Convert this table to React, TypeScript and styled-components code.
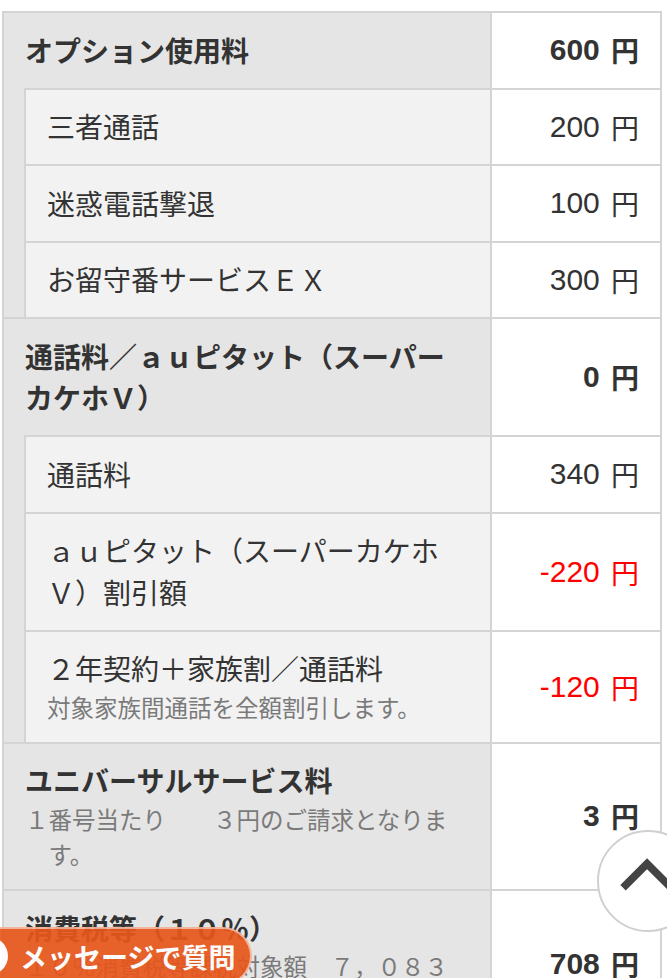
import React from "react";
import styled, { createGlobalStyle } from "styled-components";

const GlobalStyle = createGlobalStyle`
  html, body { margin: 0; padding: 0; background: #fff; }
  body {
    font-family: "Noto Sans CJK JP", "Noto Sans", sans-serif;
    color: #333;
  }
`;

const Page = styled.div`
  position: relative;
  height: 978px;
  overflow: hidden;
  padding-top: 11px;
  box-sizing: border-box;
`;

const Table = styled.div`
  margin: 0 5px 0 2px;
  border: 2px solid #d4d4d4;
  border-bottom: none;
  background: #e5e5e5;
`;

const Section = styled.div`
  & + & {
    border-top: 2px solid #d4d4d4;
  }
`;

const Row = styled.div`
  display: grid;
  grid-template-columns: 1fr 170px;
`;

const Label = styled.div<{ $sub?: boolean }>`
  padding: 16.5px 21px;
  font-size: 28px;
  line-height: 41.5px;
  font-weight: ${(p) => (p.$sub ? 400 : 700)};
  color: #333;
  ${(p) =>
    p.$sub
      ? `
    margin-left: 20px;
    border-left: 2px solid #d4d4d4;
    border-top: 2px solid #d4d4d4;
    background: #f2f2f2;
  `
      : ""}
`;

const Note = styled.div`
  font-size: 23.5px;
  line-height: 35.5px;
  font-weight: 400;
  color: #7a7a7a;
  padding-left: 1em;
  text-indent: -1em;
`;

const Amount = styled.div<{ $sub?: boolean; $neg?: boolean }>`
  display: flex;
  align-items: center;
  justify-content: flex-end;
  padding: 0 21px;
  background: #fff;
  border-left: 2px solid #d4d4d4;
  ${(p) => (p.$sub ? "border-top: 2px solid #d4d4d4;" : "")}
  font-family: "Liberation Sans", "Noto Sans CJK JP", sans-serif;
  font-size: 30px;
  font-weight: ${(p) => (p.$sub ? 400 : 700)};
  color: ${(p) => (p.$neg ? "#ff0000" : "#333")};
  white-space: nowrap;
`;

const Yen = styled.span`
  font-family: "Noto Sans CJK JP", sans-serif;
  font-size: 28px;
  margin-left: 0.4em;
`;

const MessageButton = styled.div`
  position: absolute;
  left: -36px;
  top: 927px;
  height: 54px;
  padding: 0 15px 0 4px;
  display: flex;
  align-items: center;
  gap: 12px;
  background: #e8561b;
  opacity: 0.92;
  border: 2px solid rgba(255, 255, 255, 0.55);
  border-radius: 0 29px 29px 0;
  color: #fff;
  font-size: 27px;
  font-weight: 700;
`;

const MessageIcon = styled.span`
  width: 38px;
  height: 38px;
  border-radius: 50%;
  background: #fff;
  flex: none;
`;

const ScrollTop = styled.div`
  position: absolute;
  left: 597px;
  top: 830px;
  width: 102px;
  height: 102px;
  box-sizing: border-box;
  border-radius: 50%;
  border: 2px solid #d0d0d0;
  background: #fff;
  display: flex;
  align-items: center;
  justify-content: center;
`;

type Item = {
  label: React.ReactNode;
  note?: string;
  amount: string;
  neg?: boolean;
};

type Group = { head: Item; subs?: Item[] };

const groups: Group[] = [
  {
    head: { label: "オプション使用料", amount: "600" },
    subs: [
      { label: "三者通話", amount: "200" },
      { label: "迷惑電話撃退", amount: "100" },
      { label: "お留守番サービスＥＸ", amount: "300" },
    ],
  },
  {
    head: {
      label: (
        <>
          通話料／ａｕピタット（スーパー
          <br />
          カケホＶ）
        </>
      ),
      amount: "0",
    },
    subs: [
      { label: "通話料", amount: "340" },
      { label: "ａｕピタット（スーパーカケホＶ）割引額", amount: "-220", neg: true },
      {
        label: "２年契約＋家族割／通話料",
        note: "対象家族間通話を全額割引します。",
        amount: "-120",
        neg: true,
      },
    ],
  },
  {
    head: {
      label: "ユニバーサルサービス料",
      note: "１番号当たり　　３円のご請求となります。",
      amount: "3",
    },
  },
  {
    head: {
      label: "消費税等（１０％）",
      note: "１０％消費税等課税対象額　７，０８３円",
      amount: "708",
    },
  },
];

export default function App() {
  return (
    <Page>
      <GlobalStyle />
      <Table>
        {groups.map((g, i) => (
          <Section key={i}>
            <Row>
              <Label>
                {g.head.label}
                {g.head.note && <Note>{g.head.note}</Note>}
              </Label>
              <Amount $neg={g.head.neg}>
                {g.head.amount}
                <Yen>円</Yen>
              </Amount>
            </Row>
            {g.subs?.map((s, j) => (
              <Row key={j}>
                <Label $sub>
                  {s.label}
                  {s.note && <Note>{s.note}</Note>}
                </Label>
                <Amount $sub $neg={s.neg}>
                  {s.amount}
                  <Yen>円</Yen>
                </Amount>
              </Row>
            ))}
          </Section>
        ))}
      </Table>
      <ScrollTop>
        <svg width="102" height="102" viewBox="0 0 102 102">
          <polyline
            points="25,58 50,33 75,58"
            fill="none"
            stroke="#444"
            strokeWidth="8"
            strokeLinecap="butt"
            strokeLinejoin="miter"
          />
        </svg>
      </ScrollTop>
      <MessageButton>
        <MessageIcon />
        メッセージで質問
      </MessageButton>
    </Page>
  );
}
